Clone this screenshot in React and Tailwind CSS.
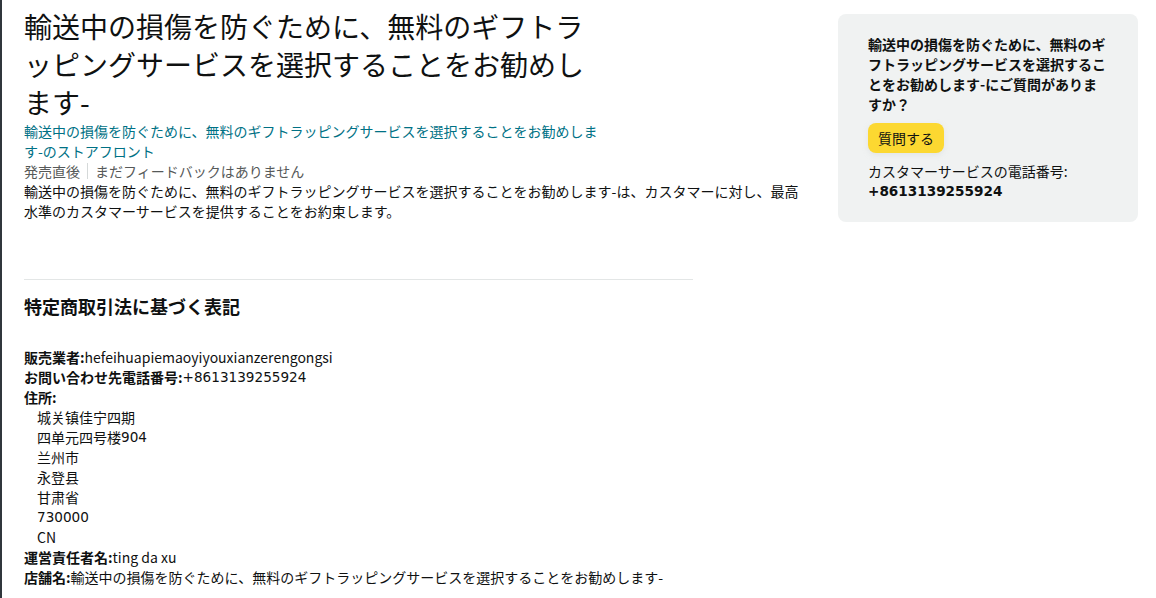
export default function App() {
  const font = { fontFamily: '"Noto Sans CJK JP", "Noto Sans", sans-serif' };
  const D = ({ children }) => (
    <span className="[font-family:'DejaVu_Sans',sans-serif] text-[13.6px] leading-[20px] align-top">{children}</span>
  );
  const addr = [
    "城关镇佳宁四期",
    <>四单元四号楼<D>904</D></>,
    "兰州市",
    "永登县",
    "甘肃省",
    <D>730000</D>,
    "CN",
  ];
  return (
    <div style={font} className="min-h-[598px] bg-white border-l-2 border-[#30363c] text-[#0f1111]">
      <div className="flex pl-[22px] pr-[18px] gap-[38px]">
        <div className="w-[776px] shrink-0">
          <h1 className="w-[580px] mt-[7px] text-[28px] leading-[38px] font-normal text-[#0f1111]">
            輸送中の損傷を防ぐために、無料のギフトラッピングサービスを選択することをお勧めします-
          </h1>
          <div className="w-[580px] text-[14px] leading-[20px] text-[#007185]">
            輸送中の損傷を防ぐために、無料のギフトラッピングサービスを選択することをお勧めします-のストアフロント
          </div>
          <div className="text-[14px] leading-[20px] text-[#565959] flex items-center">
            <span>発売直後</span>
            <span className="mx-[7px] h-[16px] w-px bg-[#d5d9d9]"></span>
            <span>まだフィードバックはありません</span>
          </div>
          <p className="text-[14px] leading-[20px]">
            輸送中の損傷を防ぐために、無料のギフトラッピングサービスを選択することをお勧めします-は、カスタマーに対し、最高水準のカスタマーサービスを提供することをお約束します。
          </p>
          <div className="mt-[58px] w-[669px] h-px bg-[#e3e6e6]"></div>
          <h2 className="mt-[14px] text-[18px] leading-[24px] font-bold">特定商取引法に基づく表記</h2>
          <div className="mt-[29px] text-[14px] leading-[20px]">
            <div className="h-[20px]"><span className="font-bold">販売業者:</span>hefeihuapiemaoyiyouxianzerengongsi</div>
            <div className="h-[20px]"><span className="font-bold">お問い合わせ先電話番号:</span><D>+8613139255924</D></div>
            <div className="h-[20px] font-bold">住所:</div>
            {addr.map((a, i) => (
              <div key={i} className="h-[20px] pl-[13px]">{a}</div>
            ))}
            <div className="h-[20px]"><span className="font-bold">運営責任者名:</span>ting da xu</div>
            <div className="h-[20px]"><span className="font-bold">店舗名:</span>輸送中の損傷を防ぐために、無料のギフトラッピングサービスを選択することをお勧めします-</div>
          </div>
        </div>
        <div className="w-[300px] shrink-0">
          <div className="mt-[14px] rounded-[8px] bg-[#f0f2f2] px-[30px] pt-[20px] pb-[21px]">
            <div className="text-[14px] leading-[20px] font-bold">
              輸送中の損傷を防ぐために、無料のギフトラッピングサービスを選択することをお勧めします-にご質問がありますか？
            </div>
            <button className="mt-[9px] h-[30px] px-[10px] rounded-[8px] bg-[#fcd831] text-[14px] text-[#0f1111] shadow-[0_2px_5px_rgba(213,217,217,0.5)]">
              質問する
            </button>
            <div className="mt-[8px] text-[14px] leading-[20px]">カスタマーサービスの電話番号:</div>
            <div className="h-[20px] text-[14px] leading-[20px] font-bold"><D>+8613139255924</D></div>
          </div>
        </div>
      </div>
    </div>
  );
}
